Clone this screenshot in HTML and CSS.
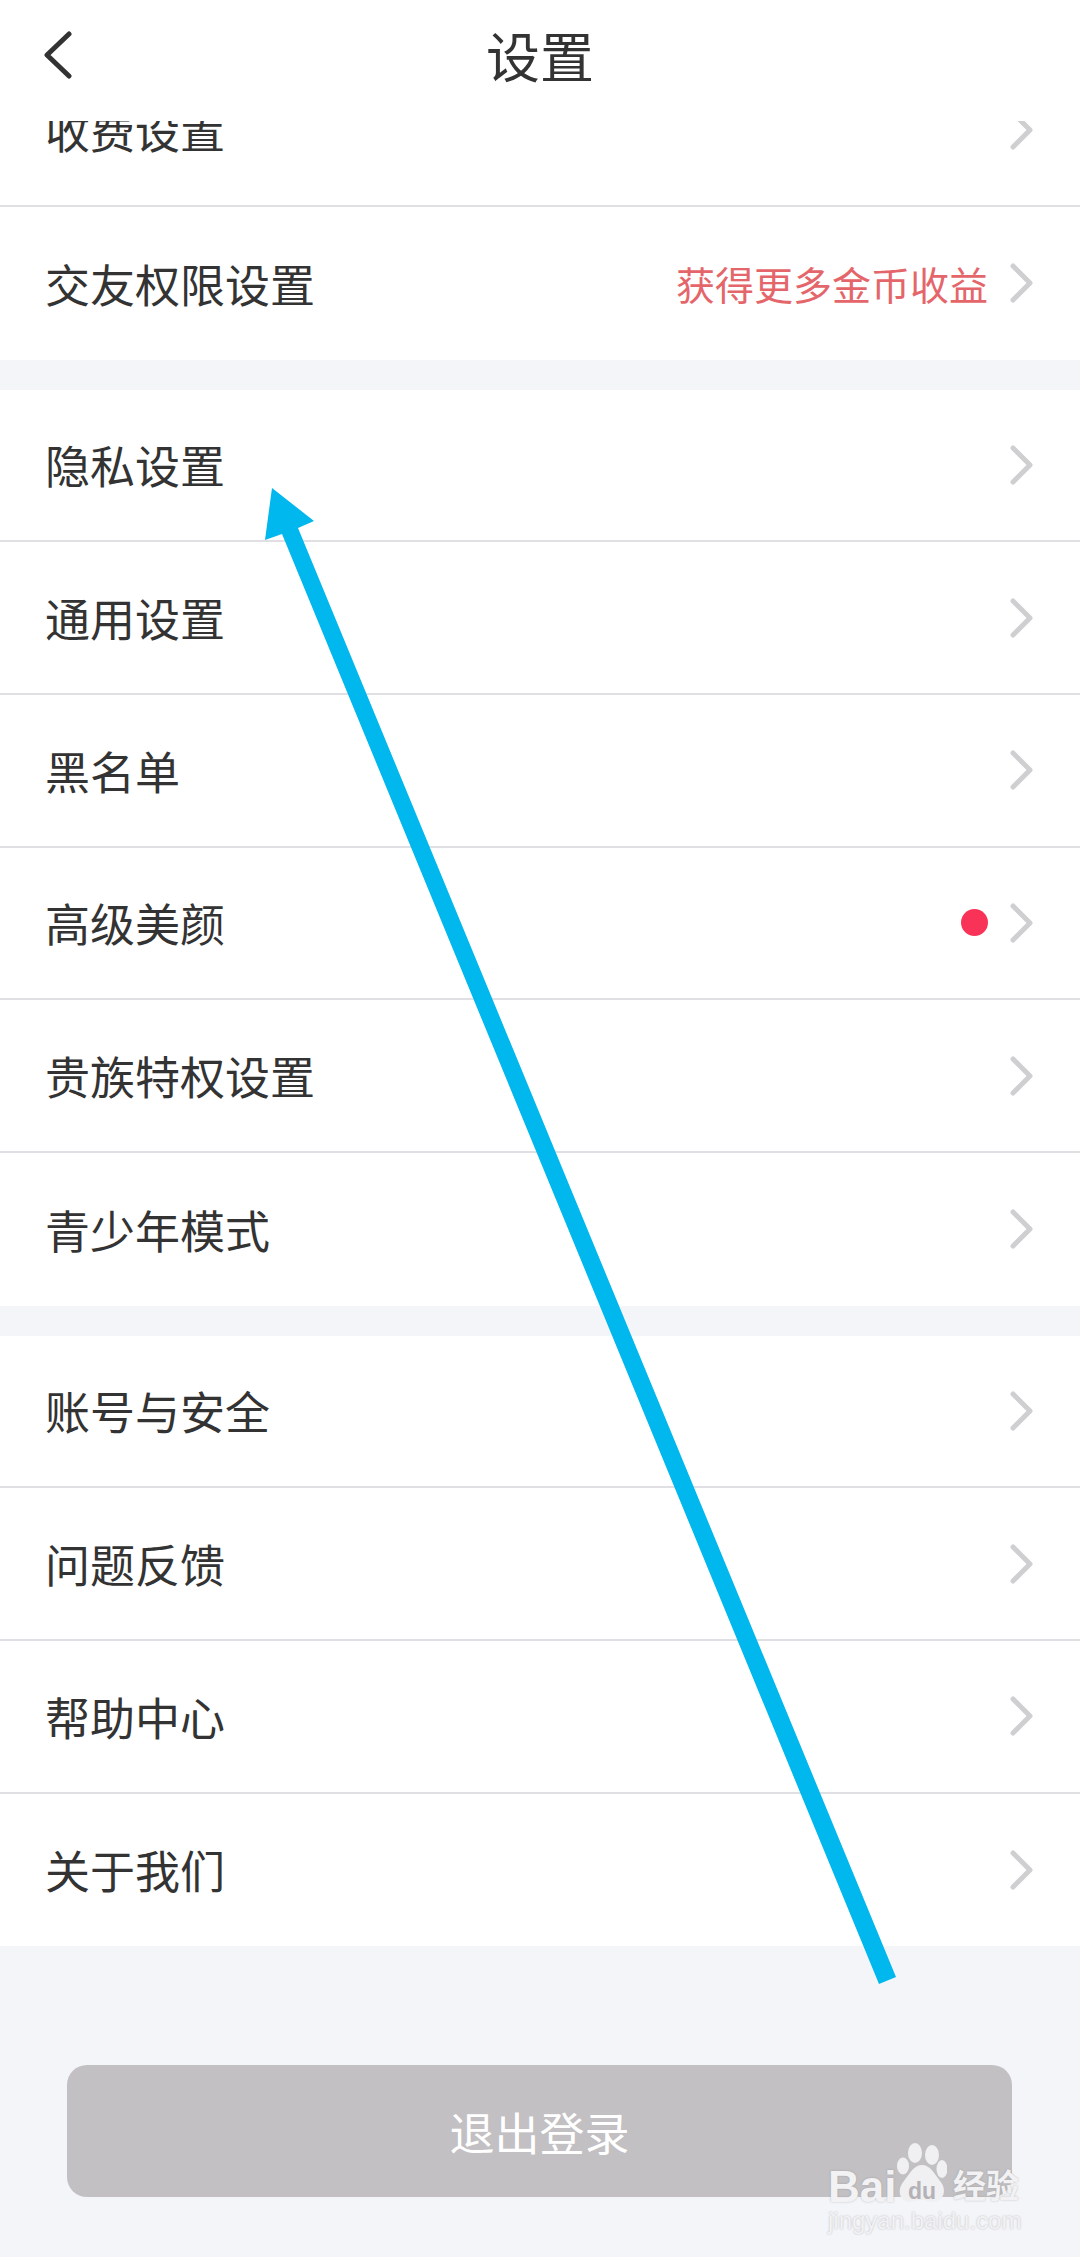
FILE: index.html
```html
<!DOCTYPE html>
<html lang="zh">

<head>
    <meta charset="utf-8">
    <title>设置</title>
    <link rel="stylesheet" href="styles.css">
</head>

<body>
    <svg class="defs" width="0" height="0">
        <symbol id="chev" viewBox="0 0 24 40">
            <path d="M3 3 L20 20 L3 37" fill="none" stroke="#cfcfd1" stroke-width="5" stroke-linecap="round" stroke-linejoin="round" />
        </symbol>
    </svg>

    <header class="topbar">
        <svg class="back" viewBox="0 0 30 48">
            <path d="M26 3 L4 24 L26 45" fill="none" stroke="#333" stroke-width="5" stroke-linecap="round" stroke-linejoin="round" />
        </svg>
        <h1 class="title">设置</h1>
    </header>

    <div class="group">
        <div class="clip">
            <div class="row"><span>收费设置</span><svg class="chev"><use href="#chev" /></svg></div>
        </div>
        <div class="row last">
            <span>交友权限设置</span>
            <span class="extra">获得更多金币收益</span>
            <svg class="chev"><use href="#chev" /></svg>
        </div>
    </div>

    <div class="group">
        <div class="row"><span>隐私设置</span><svg class="chev"><use href="#chev" /></svg></div>
        <div class="row"><span>通用设置</span><svg class="chev"><use href="#chev" /></svg></div>
        <div class="row"><span>黑名单</span><svg class="chev"><use href="#chev" /></svg></div>
        <div class="row">
            <span>高级美颜</span>
            <i class="dot"></i>
            <svg class="chev"><use href="#chev" /></svg>
        </div>
        <div class="row"><span>贵族特权设置</span><svg class="chev"><use href="#chev" /></svg></div>
        <div class="row last"><span>青少年模式</span><svg class="chev"><use href="#chev" /></svg></div>
    </div>

    <div class="group">
        <div class="row"><span>账号与安全</span><svg class="chev"><use href="#chev" /></svg></div>
        <div class="row"><span>问题反馈</span><svg class="chev"><use href="#chev" /></svg></div>
        <div class="row"><span>帮助中心</span><svg class="chev"><use href="#chev" /></svg></div>
        <div class="row last"><span>关于我们</span><svg class="chev"><use href="#chev" /></svg></div>
    </div>

    <div class="logout">退出登录</div>

    <!-- annotation arrow drawn over the screenshot -->
    <svg class="arrow" viewBox="0 0 1080 2257">
        <polygon points="272,488 314,521 298,528 896,1977 879,1984 282,534 265,540" fill="#00b7ee" />
    </svg>

    <div class="watermark">
        <svg class="paw" viewBox="0 0 50 60">
            <ellipse cx="18" cy="10" rx="7" ry="10" />
            <ellipse cx="35" cy="12" rx="7" ry="10" />
            <ellipse cx="6" cy="23" rx="6" ry="8.5" />
            <ellipse cx="45" cy="26" rx="5.5" ry="9" />
            <path d="M25 22 C33 22 37 30 43 38 C51 47 46 59 36 59 C31 59 29 57 25 57 C21 57 18 59 13 59 C3 59 -1 47 7 38 C13 30 17 22 25 22 Z" />
        </svg>
        <span class="wm-bai">Bai</span>
        <span class="wm-du">du</span>
        <span class="wm-cn">经验</span>
        <span class="wm-url">jingyan.baidu.com</span>
    </div>
</body>

</html>
```

FILE: styles.css
```css
* {
    box-sizing: border-box;
}

html,
body {
    margin: 0;
    height: 2257px;
    overflow: hidden;
}

body {
    position: relative;
    background: #f4f5f9;
    color: #333;
    font-family: "Noto Sans CJK SC", "Noto Sans", sans-serif;
}

.defs {
    position: absolute;
}

.topbar {
    position: relative;
    height: 121px;
    background: #fff;
    display: flex;
    align-items: center;
    justify-content: center;
    padding-bottom: 12px;
}

.back {
    position: absolute;
    left: 43px;
    top: 31px;
    width: 30px;
    height: 48px;
}

.title {
    margin: 0;
    font-size: 54px;
    font-weight: 400;
    line-height: 70px;
}

.group {
    background: #fff;
    margin-bottom: 30px;
}

.clip {
    height: 86px;
    overflow: hidden;
    display: flex;
    flex-direction: column;
    justify-content: flex-end;
}

.clip .row {
    flex: none;
}

.row {
    height: 152.67px;
    display: flex;
    align-items: center;
    padding: 0 46px 0 45px;
    border-bottom: 2px solid #e0e0e4;
    font-size: 45px;
}

.row.last {
    border-bottom: 0;
}

.row span:first-child {
    flex: 1;
}

.extra {
    color: #e4666a;
    font-size: 39px;
    margin-right: 22px;
}

.dot {
    width: 27px;
    height: 27px;
    border-radius: 50%;
    background: #f93358;
    margin-right: 22px;
}

.chev {
    width: 24px;
    height: 40px;
    flex: none;
}

.logout {
    margin: 119px 68px 0 67px;
    height: 132px;
    border-radius: 20px;
    background: #c2c0c3;
    color: #fff;
    font-size: 45px;
    display: flex;
    align-items: center;
    justify-content: center;
}

.arrow {
    position: absolute;
    left: 0;
    top: 0;
    width: 1080px;
    height: 2257px;
}

/* baidu jingyan stamp in the corner */
.watermark {
    position: absolute;
    left: 826px;
    top: 2140px;
    width: 200px;
    height: 100px;
    color: #f2f2f4;
    text-shadow: 0 0 2px rgba(110, 110, 110, 0.45);
    font-family: "Liberation Sans", sans-serif;
    font-weight: 700;
}

.watermark span {
    position: absolute;
    white-space: nowrap;
    line-height: 1;
}

.paw {
    position: absolute;
    left: 71px;
    top: 3px;
    width: 50px;
    height: 60px;
    fill: #f0f0f2;
}

.wm-bai {
    left: 2px;
    top: 25px;
    font-size: 44px;
}

.wm-du {
    left: 82px;
    top: 40px;
    font-size: 23px;
    color: #b4b2b6;
    text-shadow: none;
}

.wm-cn {
    left: 127px;
    top: 28px;
    font-size: 33px;
    font-family: "Noto Sans CJK SC", sans-serif;
}

.wm-url {
    left: 2px;
    top: 69px;
    font-size: 24px;
    font-weight: 400;
}
```
